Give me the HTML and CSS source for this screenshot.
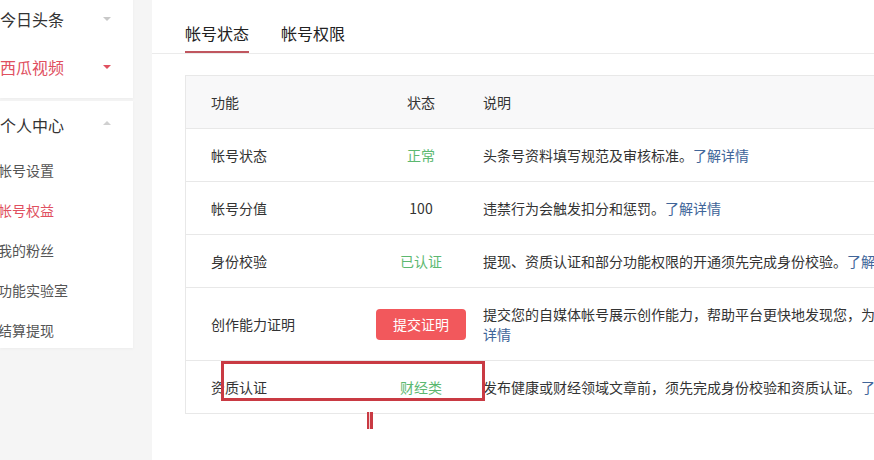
FILE: index.html
```html
<!DOCTYPE html>
<html lang="zh-CN">
<head>
    <meta charset="UTF-8">
    <meta name="viewport" content="width=device-width, initial-scale=1.0">
    <title>帐号状态</title>
    <link rel="stylesheet" href="styles.css">
</head>
<body>
    <aside class="sidebar">
        <div class="nav-card nav-card-top">
            <div class="nav-item">今日头条<span class="caret"></span></div>
            <div class="nav-item active">西瓜视频<span class="caret"></span></div>
        </div>
        <div class="nav-card">
            <div class="nav-item">个人中心<span class="caret up"></span></div>
            <ul class="sub-nav">
                <li>帐号设置</li>
                <li class="active">帐号权益</li>
                <li>我的粉丝</li>
                <li>功能实验室</li>
                <li>结算提现</li>
            </ul>
        </div>
    </aside>

    <main class="panel">
        <div class="tabs">
            <span class="tab active">帐号状态</span>
            <span class="tab">帐号权限</span>
        </div>

        <div class="table-wrap">
            <table class="status-table">
                <thead>
                    <tr>
                        <th class="col-name">功能</th>
                        <th class="col-state">状态</th>
                        <th class="col-desc">说明</th>
                    </tr>
                </thead>
                <tbody>
                    <tr>
                        <td>帐号状态</td>
                        <td class="state green">正常</td>
                        <td>头条号资料填写规范及审核标准。<a href="#">了解详情</a></td>
                    </tr>
                    <tr>
                        <td>帐号分值</td>
                        <td class="state">100</td>
                        <td>违禁行为会触发扣分和惩罚。<a href="#">了解详情</a></td>
                    </tr>
                    <tr>
                        <td>身份校验</td>
                        <td class="state green">已认证</td>
                        <td>提现、资质认证和部分功能权限的开通须先完成身份校验。<a href="#">了解详情</a></td>
                    </tr>
                    <tr>
                        <td>创作能力证明</td>
                        <td class="state"><button class="btn-submit">提交证明</button></td>
                        <td>提交您的自媒体帐号展示创作能力，帮助平台更快地发现您，为您推荐更多优质内容。<a href="#">了解详情</a></td>
                    </tr>
                    <tr>
                        <td>资质认证</td>
                        <td class="state green">财经类</td>
                        <td>发布健康或财经领域文章前，须先完成身份校验和资质认证。<a href="#">了解详情</a></td>
                    </tr>
                </tbody>
            </table>
            <!-- annotation marks drawn over the screenshot -->
            <div class="mark-box"></div>
            <div class="mark-cursor"></div>
        </div>
    </main>
</body>
</html>
```

FILE: styles.css
```css
body {
    margin: 0;
    background-color: #f5f5f5;
    font-family: "Noto Sans CJK SC", "Noto Sans", sans-serif;
    color: #333;
    display: flex;
    height: 460px;
    overflow: hidden;
}
.sidebar {
    width: 133px;
    margin-right: 19px;
    flex-shrink: 0;
}
.nav-card {
    background-color: #fff;
    box-shadow: 0 1px 3px rgba(0, 0, 0, 0.04);
    height: 247px;
}
.nav-card-top {
    margin-top: -5px;
    height: 103px;
    margin-bottom: 3px;
}
.nav-item {
    height: 48px;
    line-height: 48px;
    font-size: 16px;
    color: #333;
    position: relative;
}
.nav-item.active {
    color: #e0505f;
}
.caret {
    position: absolute;
    left: 103px;
    top: 22px;
    border-left: 4px solid transparent;
    border-right: 4px solid transparent;
    border-top: 4px solid #c8c8c8;
}
.nav-item.active .caret {
    border-top-color: #e0505f;
}
.caret.up {
    border-top: none;
    border-bottom: 4px solid #d0d0d0;
    top: 20px;
}
.sub-nav {
    list-style: none;
    margin: 1px 0 0 -2px;
    padding: 0;
}
.sub-nav li {
    height: 40px;
    line-height: 40px;
    font-size: 14px;
    color: #555;
}
.sub-nav li.active {
    color: #e0505f;
}
.panel {
    flex: 1;
    background-color: #fff;
    overflow: hidden;
}
.tabs {
    height: 53px;
    border-bottom: 1px solid #ebebeb;
    padding-left: 33px;
    display: flex;
    gap: 32px;
}
.tab {
    font-size: 16px;
    line-height: 20px;
    padding-top: 23px;
    height: 30px;
    color: #222;
}
.tab.active {
    border-bottom: 2px solid #c0565f;
    height: 28px;
}
.table-wrap {
    position: relative;
    margin: 21px 0 0 33px;
}
.status-table {
    border-collapse: collapse;
    border: 1px solid #e8e8e8;
    font-size: 14px;
    line-height: 20px;
    width: 880px;
}
.status-table th {
    background-color: #f8f8f9;
    font-weight: normal;
    text-align: left;
    padding: 16px 0;
    color: #333;
}
.status-table td {
    border-top: 1px solid #e8e8e8;
    padding: 16px 0;
    vertical-align: middle;
}
.status-table th.col-name,
.status-table td:first-child {
    padding-left: 25px;
    width: 160px;
}
.status-table th.col-state,
.status-table td.state {
    width: 100px;
    text-align: center;
}
.status-table th.col-desc,
.status-table td:last-child {
    padding-left: 12px;
    padding-right: 20px;
}
.status-table td.green {
    color: #5cb870;
}
.status-table a {
    color: #406599;
    text-decoration: none;
}
.btn-submit {
    width: 90px;
    height: 31px;
    border: none;
    border-radius: 4px;
    background-color: #f2585c;
    color: #fff;
    font-family: inherit;
    font-size: 14px;
    cursor: pointer;
}
.mark-box {
    position: absolute;
    left: 36px;
    top: 286px;
    width: 258px;
    height: 34px;
    border: 3px solid #c93a43;
}
.mark-cursor {
    position: absolute;
    left: 182px;
    top: 337px;
    width: 6px;
    height: 17px;
    background: linear-gradient(90deg, #c93a43 0 2px, #f3d2d2 2px 3px, #c93a43 3px 6px);
}
```
